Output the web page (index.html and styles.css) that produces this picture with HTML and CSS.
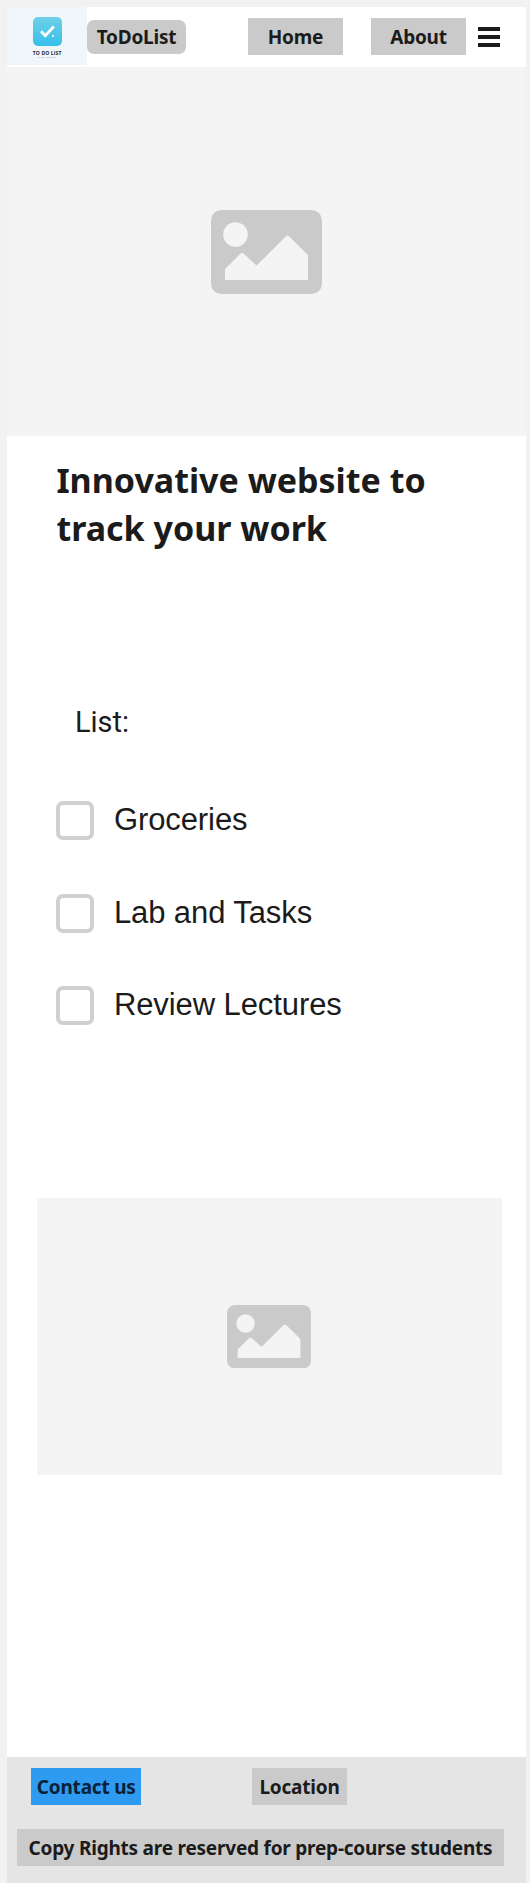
FILE: index.html
```html
<!DOCTYPE html>
<html lang="en">
<head>
<meta charset="utf-8">
<title>ToDoList</title>
<link rel="stylesheet" href="styles.css">
</head>
<body>
<div class="page">
  <header class="header">
    <div class="logo">
      <svg class="logo-mark" viewBox="0 0 29 29">
        <defs><linearGradient id="sky" x1="0" y1="0" x2="0" y2="1"><stop offset="0" stop-color="#70d0e9"/><stop offset="1" stop-color="#35bfea"/></linearGradient></defs>
        <rect width="29" height="29" rx="5" fill="url(#sky)"/>
        <path d="M8 14.2l4.3 4.500 8.500-9.200" fill="none" stroke="#fff" stroke-width="2.8"/>
        <circle cx="20" cy="19" r="1.1" fill="#fff"/>
      </svg>
      <span class="logo-name">TO DO LIST</span>
      <span class="logo-sub">TASK CLIENT</span>
    </div>
    <div class="brand">ToDoList</div>
    <a class="btn home">Home</a>
    <a class="btn about">About</a>
    <div class="menu"><i></i><i></i><i></i></div>
  </header>
  <div class="hero">
    <svg class="picture" viewBox="0 0 111 84">
      <rect width="111" height="84" rx="10.5" fill="#cacaca"/>
      <circle cx="24.5" cy="24.5" r="12.3" fill="#f4f4f4"/>
      <path d="M14 70V59L29 44q2-2 4 0L45.500 55.500 74.500 26.700q2-2 4 0L97 45V70z" fill="#f4f4f4"/>
    </svg>
  </div>
  <main class="content">
    <h1 class="title">Innovative website to<br>track your work</h1>
    <h2 class="list-title">List:</h2>
    <ul class="tasks">
      <li class="task"><span class="box"></span><span class="task-name">Groceries</span></li>
      <li class="task"><span class="box"></span><span class="task-name">Lab and Tasks</span></li>
      <li class="task"><span class="box"></span><span class="task-name">Review Lectures</span></li>
    </ul>
    <div class="banner">
      <svg class="picture small" viewBox="0 0 111 84">
        <rect width="111" height="84" rx="10.5" fill="#cacaca"/>
        <circle cx="24.500" cy="24.500" r="12.3" fill="#f4f4f4"/>
        <path d="M14 70V59L29 44q2-2 4 0L45.500 55.500 74.500 26.700q2-2 4 0L97 45V70z" fill="#f4f4f4"/>
      </svg>
    </div>
  </main>
  <footer class="footer">
    <div class="links">
      <a class="btn contact">Contact us</a>
      <a class="btn location">Location</a>
    </div>
    <div class="btn copy">Copy Rights are reserved for prep-course students</div>
  </footer>
</div>
</body>
</html>
```
FILE: styles.css
```css
* { box-sizing: border-box; }
body { margin: 0; background: #f2f2f2; color: #1b1b1b; font-family: "Noto Sans", sans-serif; }
.page { width: 519px; height: 1883px; margin-left: 7.4px; padding-top: 7px; display: flex; flex-direction: column; }
.header { height: 60px; flex: none; background: #fff; display: flex; align-items: flex-start; }
.logo { width: 79.6px; height: 58px; background: #f1f6fb; display: flex; flex-direction: column; align-items: center; padding-top: 10px; }
.logo-mark { width: 29px; height: 29px; flex: none; }
.logo-name { margin-top: 4px; font: 700 5px/6px "Open Sans", sans-serif; letter-spacing: .15px; white-space: nowrap; color: #1d2530; }
.logo-sub { font: 2.5px/3px "Open Sans", sans-serif; letter-spacing: .3px; color: #7c848c; }
.brand { width: 99px; height: 34px; margin-top: 13px; border-radius: 7px; background: #cacaca; font-weight: 700; font-size: 19px; letter-spacing: -.22px; line-height: 35px; text-align: center; white-space: nowrap; }
.btn { display: block; height: 37px; background: #cacaca; font-weight: 700; font-size: 19px; letter-spacing: -.22px; line-height: 39px; text-align: center; white-space: nowrap; }
.home { width: 95px; margin: 11px 0 0 62px; }
.about { width: 95px; margin: 11px 0 0 28px; }
.menu { width: 22px; margin: 20px 0 0 12px; display: flex; flex-direction: column; gap: 4.5px; }
.menu i { height: 3.5px; background: #1b1b1b; }
.hero { height: 369px; flex: none; background: #f4f4f4; display: flex; justify-content: center; padding: 143px 1px 0 0; }
.picture { width: 111px; height: 84px; display: block; }
.small { width: 84px; height: 63.5px; }
.content { height: 1321px; flex: none; background: #fff; }
.title { margin: 0; padding: 20px 0 0 49px; font-size: 34px; line-height: 48px; font-weight: 700; white-space: nowrap; }
.list-title { margin: 152px 0 0 67.5px; font: 400 29px/36px Roboto, sans-serif; }
.tasks { list-style: none; margin: 61px 0 0 48.5px; padding: 0; display: flex; flex-direction: column; gap: 53.5px; }
.task { height: 39px; display: flex; align-items: center; gap: 19.5px; }
.box { width: 38.5px; height: 39px; flex: none; border: 4px solid #d0d0d0; border-radius: 7px; background: #fff; }
.task-name { font: 31px/38px "Liberation Sans", sans-serif; letter-spacing: -.09px; margin-top: -1px; white-space: nowrap; }
.banner { width: 465px; height: 277px; margin: 173px 0 0 29.6px; background: #f4f4f4; display: flex; align-items: center; justify-content: center; }
.footer { height: 126px; flex: none; background: #e5e5e5; padding: 11px 0 0 9.6px; }
.links { display: flex; padding-left: 14px; }
.contact { width: 110.5px; background: #2e9bf0; color: #0b2136; }
.location { width: 95px; margin-left: 110.5px; }
.copy { width: 487px; margin-top: 24px; }
```
